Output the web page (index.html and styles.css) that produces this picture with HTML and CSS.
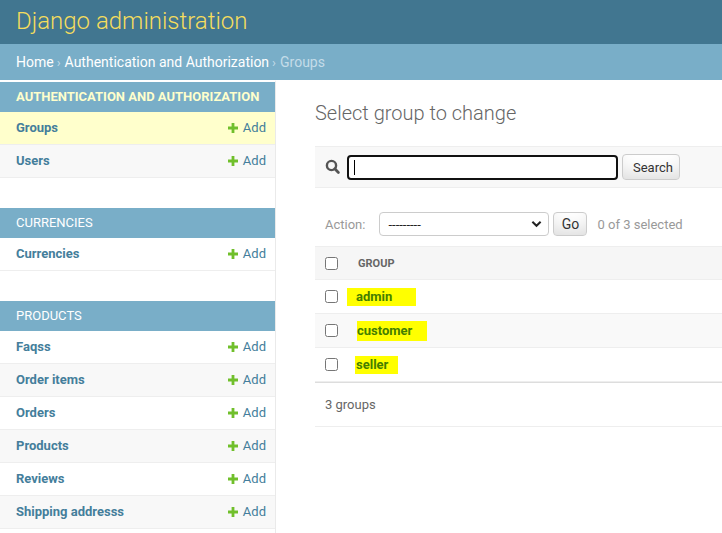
FILE: index.html
```html
<!DOCTYPE html>
<html lang="en">
<head>
<meta charset="utf-8">
<title>Select group to change | Django site admin</title>
<link rel="stylesheet" href="styles.css">
</head>
<body>
<div class="header">
  <h1 class="branding">Django administration</h1>
</div>
<div class="breadcrumbs">
  <a href="#">Home</a><span class="sep">›</span><a href="#">Authentication and Authorization</a><span class="sep">›</span><span class="cur">Groups</span>
</div>
<div class="main">
  <nav class="sidebar">
    <div class="module current-app">
      <div class="caption">Authentication and Authorization</div>
      <div class="mrow current-model"><a class="model" href="#">Groups</a><a class="addlink" href="#"><svg class="plus" viewBox="0 0 10 10" width="10" height="10"><path d="M3.6 0h2.8v3.6H10v2.8H6.4V10H3.6V6.4H0V3.6h3.6z" fill="#70bf2b"/></svg>Add</a></div>
      <div class="mrow alt"><a class="model" href="#">Users</a><a class="addlink" href="#"><svg class="plus" viewBox="0 0 10 10" width="10" height="10"><path d="M3.6 0h2.8v3.6H10v2.8H6.4V10H3.6V6.4H0V3.6h3.6z" fill="#70bf2b"/></svg>Add</a></div>
    </div>
    <div class="module">
      <div class="caption">Currencies</div>
      <div class="mrow"><a class="model" href="#">Currencies</a><a class="addlink" href="#"><svg class="plus" viewBox="0 0 10 10" width="10" height="10"><path d="M3.6 0h2.8v3.6H10v2.8H6.4V10H3.6V6.4H0V3.6h3.6z" fill="#70bf2b"/></svg>Add</a></div>
    </div>
    <div class="module">
      <div class="caption">Products</div>
      <div class="mrow"><a class="model" href="#">Faqss</a><a class="addlink" href="#"><svg class="plus" viewBox="0 0 10 10" width="10" height="10"><path d="M3.6 0h2.8v3.6H10v2.8H6.4V10H3.6V6.4H0V3.6h3.6z" fill="#70bf2b"/></svg>Add</a></div>
      <div class="mrow alt"><a class="model" href="#">Order items</a><a class="addlink" href="#"><svg class="plus" viewBox="0 0 10 10" width="10" height="10"><path d="M3.6 0h2.8v3.6H10v2.8H6.4V10H3.6V6.4H0V3.6h3.6z" fill="#70bf2b"/></svg>Add</a></div>
      <div class="mrow"><a class="model" href="#">Orders</a><a class="addlink" href="#"><svg class="plus" viewBox="0 0 10 10" width="10" height="10"><path d="M3.6 0h2.8v3.6H10v2.8H6.4V10H3.6V6.4H0V3.6h3.6z" fill="#70bf2b"/></svg>Add</a></div>
      <div class="mrow alt"><a class="model" href="#">Products</a><a class="addlink" href="#"><svg class="plus" viewBox="0 0 10 10" width="10" height="10"><path d="M3.6 0h2.8v3.6H10v2.8H6.4V10H3.6V6.4H0V3.6h3.6z" fill="#70bf2b"/></svg>Add</a></div>
      <div class="mrow"><a class="model" href="#">Reviews</a><a class="addlink" href="#"><svg class="plus" viewBox="0 0 10 10" width="10" height="10"><path d="M3.6 0h2.8v3.6H10v2.8H6.4V10H3.6V6.4H0V3.6h3.6z" fill="#70bf2b"/></svg>Add</a></div>
      <div class="mrow alt"><a class="model" href="#">Shipping addresss</a><a class="addlink" href="#"><svg class="plus" viewBox="0 0 10 10" width="10" height="10"><path d="M3.6 0h2.8v3.6H10v2.8H6.4V10H3.6V6.4H0V3.6h3.6z" fill="#70bf2b"/></svg>Add</a></div>
    </div>
  </nav>
  <div class="content">
    <h1 class="title">Select group to change</h1>
    <div class="toolbar">
      <svg class="search-icon" viewBox="0 0 18 16" width="18" height="16"><circle cx="6.5" cy="6.5" r="4.6" fill="none" stroke="#555" stroke-width="2.4"/><path d="M9.8 9.8l3.6 3.6" stroke="#555" stroke-width="2.8" stroke-linecap="round"/></svg>
      <div class="searchbox"><span class="caret"></span></div>
      <button class="btn search-btn" type="button">Search</button>
    </div>
    <div class="actions">
      <span class="action-label">Action:</span>
      <div class="select"><span>---------</span><svg class="chev" viewBox="0 0 12 8" width="11" height="8"><path d="M1.5 1.5L6 6l4.5-4.5" fill="none" stroke="#222" stroke-width="2.2"/></svg></div>
      <button class="btn go-btn" type="button">Go</button>
      <span class="counter">0 of 3 selected</span>
    </div>
    <div class="results">
      <div class="thead">
        <div class="cbcol"><input type="checkbox" class="cb"></div>
        <div class="colname">Group</div>
      </div>
      <div class="trow">
        <div class="cbcol"><input type="checkbox" class="cb"></div>
        <div class="namecell"><a href="#" class="hl hl-admin">admin</a></div>
      </div>
      <div class="trow alt">
        <div class="cbcol"><input type="checkbox" class="cb"></div>
        <div class="namecell"><a href="#" class="hl hl-customer">customer</a></div>
      </div>
      <div class="trow">
        <div class="cbcol"><input type="checkbox" class="cb"></div>
        <div class="namecell"><a href="#" class="hl hl-seller">seller</a></div>
      </div>
    </div>
    <p class="paginator">3 groups</p>
  </div>
</div>
</body>
</html>
```
FILE: styles.css
```css
* { box-sizing: border-box; }
html, body { margin: 0; padding: 0; }
body {
  font-family: Roboto, "Liberation Sans", sans-serif;
  font-size: 14px;
  color: #333;
  background: #fff;
  overflow: hidden;
}
a { text-decoration: none; }

.header {
  background: #417690;
  height: 44px;
  padding: 7px 16px 9px;
}
.branding {
  margin: 0;
  font-size: 24px;
  line-height: 28px;
  font-weight: 300;
  color: #f5dd5d;
}

.breadcrumbs {
  background: #79aec8;
  height: 36px;
  padding: 10px 16px;
  font-size: 14px;
  line-height: 16px;
  color: #c4dce8;
}
.breadcrumbs a { color: #fff; }
.breadcrumbs .sep { margin: 0 4px 0 3px; font-size: 13px; }
.breadcrumbs .cur { color: #c4dce8; }

.main {
  display: flex;
  min-height: 453px;
}

.sidebar {
  flex: 0 0 276px;
  width: 276px;
  min-width: 0;
  overflow: hidden;
  border-top: 2px solid #fff;
  border-right: 1px solid #eaeaea;
}
.module { margin-bottom: 30px; }
.caption {
  background: #79aec8;
  color: #fff;
  font-size: 13px;
  line-height: 14px;
  padding: 8px 16px;
  text-transform: uppercase;
  font-weight: 400;
  white-space: nowrap;
}
.current-app .caption { color: #ffc; font-weight: 700; }
.mrow {
  display: flex;
  justify-content: space-between;
  align-items: center;
  height: 33px;
  padding: 0 9px 0 16px;
  border-bottom: 1px solid #eee;
  font-size: 13px;
  line-height: 16px;
  background: #fff;
}
.mrow.alt { background: #f8f8f8; }
.mrow.current-model { background: #ffc; }
.model { color: #447e9b; font-weight: 700; }
.addlink {
  color: #447e9b;
  display: flex;
  align-items: center;
}
.plus { margin-right: 5px; }

.content {
  flex: 1;
  padding: 20px 0 20px 39px;
  min-width: 0;
}
.title {
  margin: 0 0 21px;
  padding-top: 1px;
  font-size: 20px;
  line-height: 24px;
  font-weight: 300;
  color: #666;
}

.toolbar {
  display: flex;
  align-items: center;
  background: #f8f8f8;
  border-top: 1px solid #eee;
  border-bottom: 1px solid #eee;
  padding: 8px 10px;
  height: 42px;
  margin-bottom: 14px;
}
.search-icon { margin-right: 4px; flex: none; }
.searchbox {
  width: 271px;
  height: 25px;
  border: 2px solid #111;
  border-radius: 4px;
  background: #fff;
  padding: 4px 5px;
  display: flex;
  align-items: center;
}
.caret { width: 1px; height: 15px; background: #000; }
.btn {
  font-family: Roboto, "Liberation Sans", sans-serif;
  color: #333;
  border: 1px solid #ccc;
  border-radius: 4px;
  background: #fff;
  box-shadow: 0 -15px 20px -10px rgba(0, 0, 0, 0.15) inset;
  padding: 0 10px;
  margin: 0;
}
.search-btn {
  margin-left: 4px;
  height: 26px;
  width: 58px;
  font-size: 13px;
}

.actions {
  display: flex;
  align-items: center;
  padding: 10px;
  height: 44px;
  font-size: 13px;
  color: #999;
}
.action-label { margin-right: 14px; }
.select {
  width: 170px;
  height: 24px;
  border: 1px solid #ccc;
  border-radius: 4px;
  background: #fff;
  display: flex;
  justify-content: space-between;
  align-items: center;
  padding: 0 6px 0 8px;
  color: #222;
  font-size: 13px;
}
.go-btn {
  margin-left: 4px;
  width: 34px;
  height: 24px;
  font-size: 14px;
  padding: 0;
}
.counter { margin-left: 10px; }

.results { border-top: 1px solid #eee; }
.thead, .trow {
  display: flex;
  align-items: center;
  height: 34px;
  border-bottom: 1px solid #eee;
}
.thead { background: #f6f6f6; height: 33px; }
.trow.alt { background: #f9f9f9; }
.cbcol {
  width: 33px;
  padding-left: 10px;
  display: flex;
  align-items: center;
}
.cb { margin: 0; width: 13px; height: 13px; }
.colname {
  padding-left: 10px;
  font-size: 11px;
  font-weight: 700;
  color: #666;
  text-transform: uppercase;
}
.namecell {
  padding-left: 8px;
  font-size: 13px;
  line-height: 16px;
}
.hl {
  display: inline-block;
  background: #ffff00;
  color: #447e00;
  font-weight: 700;
}
.hl-admin { margin-left: -9px; padding: 1px 24px 1px 9px; }
.hl-customer { margin-left: 1px; padding: 2px 15px 2px 0; }
.hl-seller { margin-left: -1px; padding: 1px 10px 1px 1px; }

.paginator {
  margin: 0;
  border-top: 1px solid #ddd;
  border-bottom: 1px solid #eee;
  padding: 11px 10px 10px;
  font-size: 13px;
  line-height: 22px;
  color: #666;
}
```
